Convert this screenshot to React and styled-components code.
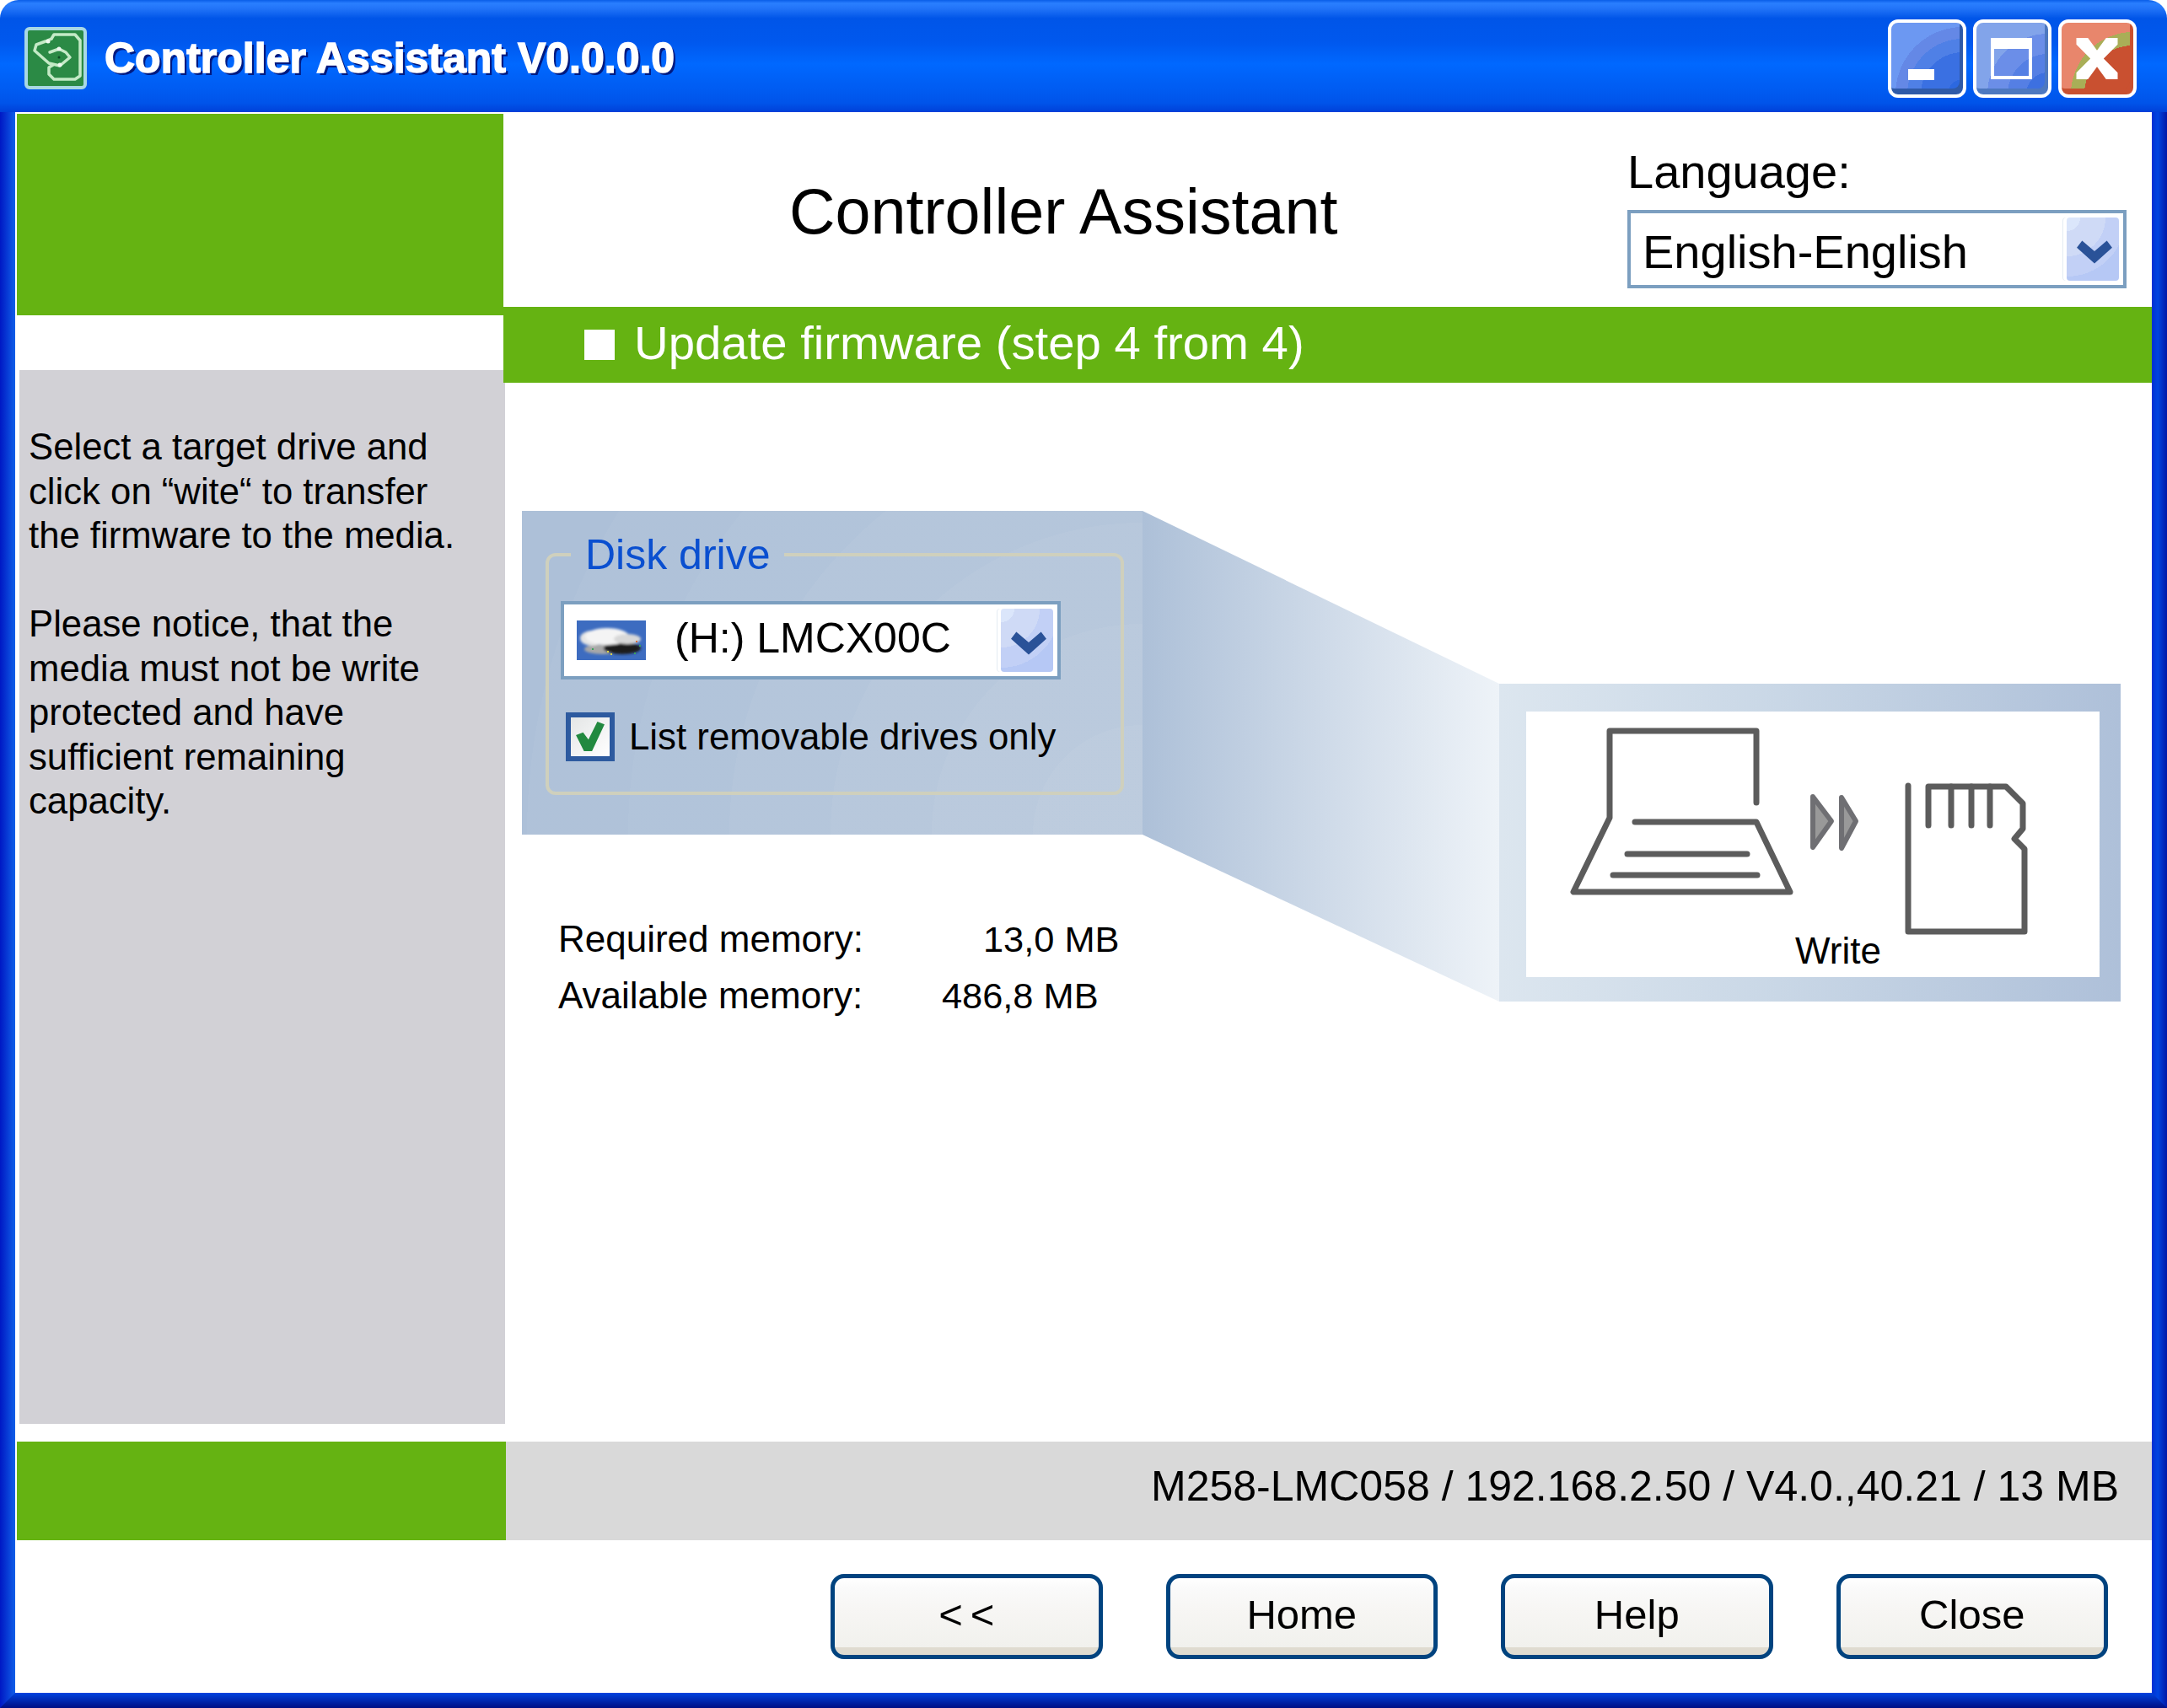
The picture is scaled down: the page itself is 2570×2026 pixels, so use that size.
import { styled, createGlobalStyle } from 'styled-components';

const GlobalStyle = createGlobalStyle`
  html, body {
    margin: 0;
    background: #fff;
  }
  * {
    box-sizing: border-box;
  }
  body {
    font-family: "Liberation Sans", Arial, sans-serif;
    color: #000;
  }
`;

function AppIcon() {
  return (
    <svg width="66" height="66" viewBox="0 0 66 66" fill="none" stroke="#c4eac6" strokeWidth="3.5" strokeLinejoin="round" strokeLinecap="round">
      <path d="M28 10 L31 5 L56 5 L62 12 L62 54 L56 58 L31 58 L25 52 L25 44 L30 41" />
      <path d="M28 10 L21 13 L10 17 L8 24 L25 39 L38 42 L50 32 L45 26 L37 22 L26 26" />
      <circle cx="24" cy="13" r="2.5" fill="#eef8ee" stroke="none" />
      <circle cx="37" cy="22" r="2.5" fill="#eef8ee" stroke="none" />
      <circle cx="38" cy="41" r="2.5" fill="#eef8ee" stroke="none" />
      <circle cx="37" cy="32" r="1.5" fill="#0e4a24" stroke="none" />
    </svg>
  );
}

function Chevron() {
  return (
    <svg width="44" height="30" viewBox="0 0 42 28">
      <path d="M1 9 L7 1 L21 13 L35 1 L41 9 L21 27 Z" fill="#2a5298" />
    </svg>
  );
}

function DriveIcon() {
  return (
    <svg width="82" height="47" viewBox="0 0 82 47">
      <defs>
        <filter id="soft">
          <feGaussianBlur stdDeviation="1.6" />
        </filter>
      </defs>
      <rect width="82" height="47" fill="#3d6cc0" />
      <g filter="url(#soft)">
        <ellipse cx="31" cy="34" rx="22" ry="6" fill="#a8a8a8" />
        <ellipse cx="54" cy="33" rx="22" ry="7" fill="#1e1e1e" />
        <ellipse cx="18" cy="21" rx="14" ry="9" fill="#e4e4e4" />
        <ellipse cx="36" cy="19" rx="26" ry="10" fill="#f4f4f4" />
        <ellipse cx="60" cy="22" rx="16" ry="6" fill="#d8d8d8" />
      </g>
      <path d="M36 36 h2 v2 h-2 Z M40 39 h2 v2 h-2 Z" fill="#d8d24a" />
      <path d="M18 33 h2 v2 h-2 Z M74 29 h2 v2 h-2 Z M68 38 h2 v2 h-2 Z" fill="#3aa45a" />
      <path d="M70 24 h2 v2 h-2 Z" fill="#d8703a" />
    </svg>
  );
}

function CheckMark() {
  return (
    <svg width="34" height="36" viewBox="0 0 32 34">
      <path d="M0 15 L8 12 L14 20 L24 0 L32 3 L18 33 L9 33 Z" fill="#21893f" />
    </svg>
  );
}

function WriteDrawing() {
  return (
    <svg width="680" height="315" viewBox="1810 844 680 315" fill="none" stroke="#5c5c5c" strokeWidth="7" strokeLinecap="round" strokeLinejoin="round">
      <path d="M2083 952 L2083 867 L1909 867 L1909 970 L1866 1058 L2123 1058 L2083 975 L1939 975" />
      <path d="M1930 1013 L2072 1013 M1913 1038 L2084 1038" />
      <path d="M2150 945 L2172 974 L2150 1005 Z M2184 946 L2201 974 L2184 1006 Z" fill="#999" stroke="#6f6f73" strokeWidth="6" />
      <path d="M2263 932 L2263 1105 L2401 1105 L2401 1007 L2389 995 L2399 983 L2399 953 L2379 933 L2287 933 L2287 979" />
      <path d="M2314 933 L2314 979 M2338 933 L2338 979 M2360 933 L2360 979" />
    </svg>
  );
}

function Combo({ children }) {
  return (
    <ComboBox>
      {children}
      <ComboArrow>
        <Chevron />
      </ComboArrow>
    </ComboBox>
  );
}

export default function App() {
  return (
    <>
      <GlobalStyle />
      <Frame>
        <TitleBar>
          <AppBadge>
            <AppIcon />
          </AppBadge>
          <TitleText>Controller Assistant V0.0.0.0</TitleText>
          <WinButtons>
            <WinButton>
              <MinGlyph />
            </WinButton>
            <WinButton $light>
              <MaxGlyph />
            </WinButton>
            <WinButton $close>
              <CloseGlyph viewBox="0 0 50 50">
                <path d="M0 0 H14 L25 15 L36 0 H50 V8 L33 25 L50 42 V50 H36 L25 35 L14 50 H0 V42 L17 25 L0 8 Z" fill="#fff" />
              </CloseGlyph>
            </WinButton>
          </WinButtons>
        </TitleBar>

        <LeftEdge />

        <Content>
          <Main>
            <Sidebar>
              <SideGreen />
              <HelpPanel>
                <p>
                  Select a target drive and
                  <br />
                  click on “wite“ to transfer
                  <br />
                  the firmware to the media.
                </p>
                <p>
                  Please notice, that the
                  <br />
                  media must not be write
                  <br />
                  protected and have
                  <br />
                  sufficient remaining
                  <br />
                  capacity.
                </p>
              </HelpPanel>
            </Sidebar>

            <MainColumn>
              <Header>
                <HeadTitle>Controller Assistant</HeadTitle>
                <LanguageBlock>
                  <LanguageLabel>Language:</LanguageLabel>
                  <Combo>
                    <LanguageValue>English-English</LanguageValue>
                  </Combo>
                </LanguageBlock>
              </Header>

              <StepBand>
                <StepSquare />
                <StepText>Update firmware (step 4 from 4)</StepText>
              </StepBand>

              <WorkArea>
                <LeftStack>
                  <DiskPanel>
                    <DiskGroup>
                      <DiskLegend>Disk drive</DiskLegend>
                      <Combo>
                        <DriveIconSlot>
                          <DriveIcon />
                        </DriveIconSlot>
                        <DriveValue>(H:) LMCX00C</DriveValue>
                      </Combo>
                      <CheckRow>
                        <CheckBox>
                          <CheckMark />
                        </CheckBox>
                        List removable drives only
                      </CheckRow>
                    </DiskGroup>
                  </DiskPanel>
                  <MemoryTable>
                    <MemoryLabel>Required memory:</MemoryLabel>
                    <MemoryValue $indent={62}>13,0 MB</MemoryValue>
                    <MemoryLabel>Available memory:</MemoryLabel>
                    <MemoryValue $indent={13}>486,8 MB</MemoryValue>
                  </MemoryTable>
                </LeftStack>
                <Funnel />
                <WritePanel>
                  <WriteCard>
                    <WriteDrawing />
                    <WriteLabel>Write</WriteLabel>
                  </WriteCard>
                </WritePanel>
              </WorkArea>
            </MainColumn>
          </Main>

          <InfoRow>
            <InfoGreen />
            <InfoText>M258-LMC058 / 192.168.2.50 / V4.0.,40.21 / 13 MB</InfoText>
          </InfoRow>

          <ButtonRow>
            <ActionButton $spread={9}>{'<<'}</ActionButton>
            <ActionButton>Home</ActionButton>
            <ActionButton>Help</ActionButton>
            <ActionButton>Close</ActionButton>
          </ButtonRow>
        </Content>

        <RightEdge />
        <BottomEdge />
      </Frame>
    </>
  );
}

const Frame = styled.div`
  display: grid;
  grid-template-columns: 18px 2534px 18px;
  grid-template-rows: 133px 1875px 18px;
  width: 2570px;
  height: 2026px;
  overflow: hidden;
  background: #fff;
`;

const TitleBar = styled.header`
  grid-column: 1 / 4;
  display: flex;
  align-items: center;
  padding: 5px 36px 0 29px;
  border-radius: 22px 22px 0 0;
  background: linear-gradient(
    to bottom,
    #0a5ee8 0,
    #2a7fff 4px,
    #2274f8 10px,
    #0055e8 22px,
    #0058ee 50px,
    #0068ff 76px,
    #005cf2 105px,
    #0054ea 122px,
    #0040d8 133px
  );
`;

const AppBadge = styled.div`
  display: flex;
  align-items: center;
  justify-content: center;
  width: 74px;
  height: 74px;
  border: 4px solid #a8d8e4;
  border-radius: 6px;
  background: #2b8a45;
`;

const TitleText = styled.h1`
  margin: 0 0 0 21px;
  font-size: 50px;
  font-weight: 700;
  color: #fff;
  text-shadow: 3px 3px 0 #001a80;
  -webkit-text-stroke: 1.5px #fff;
`;

const WinButtons = styled.div`
  display: flex;
  gap: 8px;
  margin-left: auto;
`;

const WinButton = styled.div`
  display: flex;
  align-items: center;
  justify-content: center;
  width: 93px;
  height: 93px;
  border: 4px solid #fff;
  border-radius: 12px;
  box-shadow: inset -4px -7px 0 ${(p) => (p.$close ? '#c95030' : p.$light ? '#4d78c0' : '#2f5aa8')};
  background: ${(p) =>
    p.$close
      ? 'radial-gradient(circle at 100% 100%, #c95030 0 58px, #a9ae57 58px 74px, #e8866c 74px)'
      : p.$light
        ? 'radial-gradient(circle at 100% 100%, #3d70e0 0 26px, #557fe4 26px 48px, #6b8ee8 48px 72px, #82a4ea 72px)'
        : 'radial-gradient(circle at 100% 100%, #2c68e0 0 18px, #3a70e2 18px 50px, #4f80e6 50px 66px, #6488e6 66px 80px, #6c98f2 80px)'};
`;

const MinGlyph = styled.span`
  width: 31px;
  height: 13px;
  margin: 38px 14px 0 0;
  background: #fff;
`;

const MaxGlyph = styled.span`
  width: 49px;
  height: 49px;
  margin: 0 2px 0 0;
  border: 4px solid #fff;
  border-top-width: 13px;
`;

const CloseGlyph = styled.svg`
  width: 50px;
  height: 49px;
  margin-right: 2px;
`;

const LeftEdge = styled.div`
  grid-column: 1;
  grid-row: 2 / 4;
  background: linear-gradient(to right, #0018c4, #0f5fe8);
`;

const RightEdge = styled.div`
  grid-column: 3;
  grid-row: 2 / 4;
  background: linear-gradient(to right, #0030d4, #0044e0 40%, #0018a8);
`;

const BottomEdge = styled.div`
  grid-column: 1 / 4;
  grid-row: 3;
  clip-path: polygon(18px 0, calc(100% - 18px) 0, 100% 100%, 0 100%);
  background: linear-gradient(to bottom, #0044e0, #000e84);
`;

const Content = styled.div`
  grid-column: 2;
  grid-row: 2;
  display: flex;
  flex-direction: column;
  background: #fff;
`;

const Main = styled.div`
  display: flex;
  height: 1577px;
`;

const Sidebar = styled.aside`
  display: flex;
  flex-direction: column;
  flex: none;
  width: 579px;
`;

const SideGreen = styled.div`
  width: 577px;
  height: 239px;
  margin: 2px 0 0 2px;
  background: #65b312;
`;

const HelpPanel = styled.div`
  width: 576px;
  height: 1250px;
  margin: 65px 0 0 5px;
  padding: 65px 0 0 11px;
  background: #d2d1d6;
  font-size: 43.7px;
  line-height: 52.5px;

  p {
    margin: 0 0 52.5px;
  }
`;

const MainColumn = styled.main`
  display: flex;
  flex-direction: column;
  flex: 1;
  min-width: 0;
`;

const Header = styled.div`
  display: flex;
  justify-content: space-between;
  height: 231px;
  padding: 39px 30px 0 339px;
`;

const HeadTitle = styled.h2`
  margin: 36px 0 0;
  font-size: 75.5px;
  font-weight: 400;
  line-height: 86px;
`;

const LanguageBlock = styled.div`
  display: flex;
  flex-direction: column;
  gap: 13px;
  width: 592px;
`;

const LanguageLabel = styled.div`
  font-size: 56px;
  line-height: 64px;
`;

const ComboBox = styled.div`
  display: flex;
  align-items: center;
  width: 100%;
  height: 93px;
  border: 4px solid #7c9fc0;
  background: #fff;
`;

const ComboArrow = styled.div`
  display: flex;
  align-items: center;
  justify-content: center;
  flex: none;
  width: 62px;
  height: 75px;
  margin-left: auto;
  margin-right: 5px;
  padding: 6px 0 0 4px;
  border-radius: 4px;
  background: radial-gradient(circle at 0 0, #dbe6fb 0 16px, #cfdaf6 16px 46px, #c2d0f6 46px 70px, #b6c8f5 70px);
  box-shadow: -4px 0 0 #fff, -5px 0 0 #e4ebf3;
`;

const LanguageValue = styled.span`
  padding: 5px 0 0 14px;
  font-size: 56px;
`;

const DriveIconSlot = styled.span`
  display: flex;
  margin-left: 15px;
`;

const DriveValue = styled.span`
  margin: -5px 0 0 34px;
  font-size: 50px;
`;

const StepBand = styled.div`
  display: flex;
  align-items: center;
  gap: 23px;
  height: 90px;
  padding-left: 96px;
  background: #65b312;
  color: #fff;
`;

const StepText = styled.span`
  margin-top: -5px;
  font-size: 56.3px;
`;

const StepSquare = styled.span`
  width: 36px;
  height: 36px;
  background: #fff;
`;

const WorkArea = styled.div`
  display: flex;
  align-items: flex-start;
  padding: 152px 0 0 22px;
`;

const LeftStack = styled.div`
  display: flex;
  flex-direction: column;
  flex: none;
  width: 736px;
`;

const DiskPanel = styled.section`
  height: 384px;
  padding: 24px 22px 47px 28px;
  background:
    radial-gradient(circle at 100% 100%, rgba(255, 255, 255, 0.04) 0 130px, transparent 130px),
    radial-gradient(circle at 100% 100%, rgba(255, 255, 255, 0.04) 0 250px, transparent 250px),
    radial-gradient(circle at 100% 100%, rgba(255, 255, 255, 0.04) 0 370px, transparent 370px),
    radial-gradient(circle at 100% 100%, rgba(255, 255, 255, 0.04) 0 490px, transparent 490px),
    radial-gradient(circle at 100% 100%, rgba(255, 255, 255, 0.03) 0 610px, transparent 610px),
    radial-gradient(circle at 100% 100%, rgba(255, 255, 255, 0.03) 0 730px, transparent 730px),
    #adc0d8;
`;

const DiskGroup = styled.fieldset`
  height: 313px;
  margin: 0;
  padding: 27px 0 0 14px;
  border: 4px solid #cfd0bd;
  border-radius: 12px;

  ${ComboBox} {
    width: 593px;
  }
`;

const DiskLegend = styled.legend`
  margin-left: 12px;
  padding: 0 17px;
  color: #0a4fd0;
  font-size: 50px;
  line-height: 56px;
`;

const CheckRow = styled.label`
  display: flex;
  align-items: center;
  gap: 17px;
  margin: 39px 0 0 6px;
  font-size: 43.8px;
`;

const CheckBox = styled.span`
  display: flex;
  align-items: center;
  justify-content: center;
  width: 58px;
  height: 58px;
  border: 6px solid #2d5a9f;
  background: linear-gradient(135deg, #e4e6e6, #fff);
`;

const MemoryTable = styled.div`
  display: grid;
  grid-template-columns: auto auto;
  justify-content: start;
  row-gap: 15px;
  margin: 98px 0 0 43px;
  font-size: 44px;
  line-height: 52px;
`;

const MemoryLabel = styled.div``;

const MemoryValue = styled.div`
  padding-left: ${(p) => p.$indent + 80}px;
  font-size: 43.4px;
`;

const Funnel = styled.div`
  flex: none;
  width: 423px;
  height: 582px;
  clip-path: polygon(0 0, 100% 205px, 100% 100%, 0 384px);
  background: linear-gradient(to right, #adc0d8, #eef3f8);
`;

const WritePanel = styled.section`
  flex: none;
  width: 737px;
  height: 377px;
  margin-top: 205px;
  padding: 33px 25px 29px 32px;
  background: linear-gradient(to right, #dce6ef, #c9d7e6 45%, #aec0d9);
`;

const WriteCard = styled.div`
  display: grid;
  width: 680px;
  height: 315px;
  background: #fff;

  > * {
    grid-area: 1 / 1;
  }
`;

const WriteLabel = styled.div`
  align-self: end;
  justify-self: start;
  margin: 0 0 6px 319px;
  font-size: 44px;
`;

const InfoRow = styled.div`
  display: flex;
  height: 117px;
`;

const InfoGreen = styled.div`
  flex: none;
  width: 580px;
  margin-left: 2px;
  background: #65b312;
`;

const InfoText = styled.div`
  flex: 1;
  padding-right: 39px;
  background: #d9d9d9;
  font-size: 50px;
  line-height: 106px;
  text-align: right;
`;

const ButtonRow = styled.div`
  display: flex;
  justify-content: flex-end;
  gap: 75px;
  padding: 40px 52px 0 0;
`;

const ActionButton = styled.button`
  width: 322.5px;
  height: 101px;
  padding: 0 0 6px;
  border: 5px solid #00437f;
  border-radius: 16px;
  background: linear-gradient(to bottom, #fff 0, #fafafa 14%, #f7f6f4 40%, #f1f1ed 90%, #dfdbd0 90%, #dfdbd0 100%);
  color: #000;
  font-family: "Liberation Sans", Arial, sans-serif;
  font-size: 49px;
  letter-spacing: ${(p) => p.$spread || 0}px;
  text-indent: ${(p) => p.$spread || 0}px;
`;
